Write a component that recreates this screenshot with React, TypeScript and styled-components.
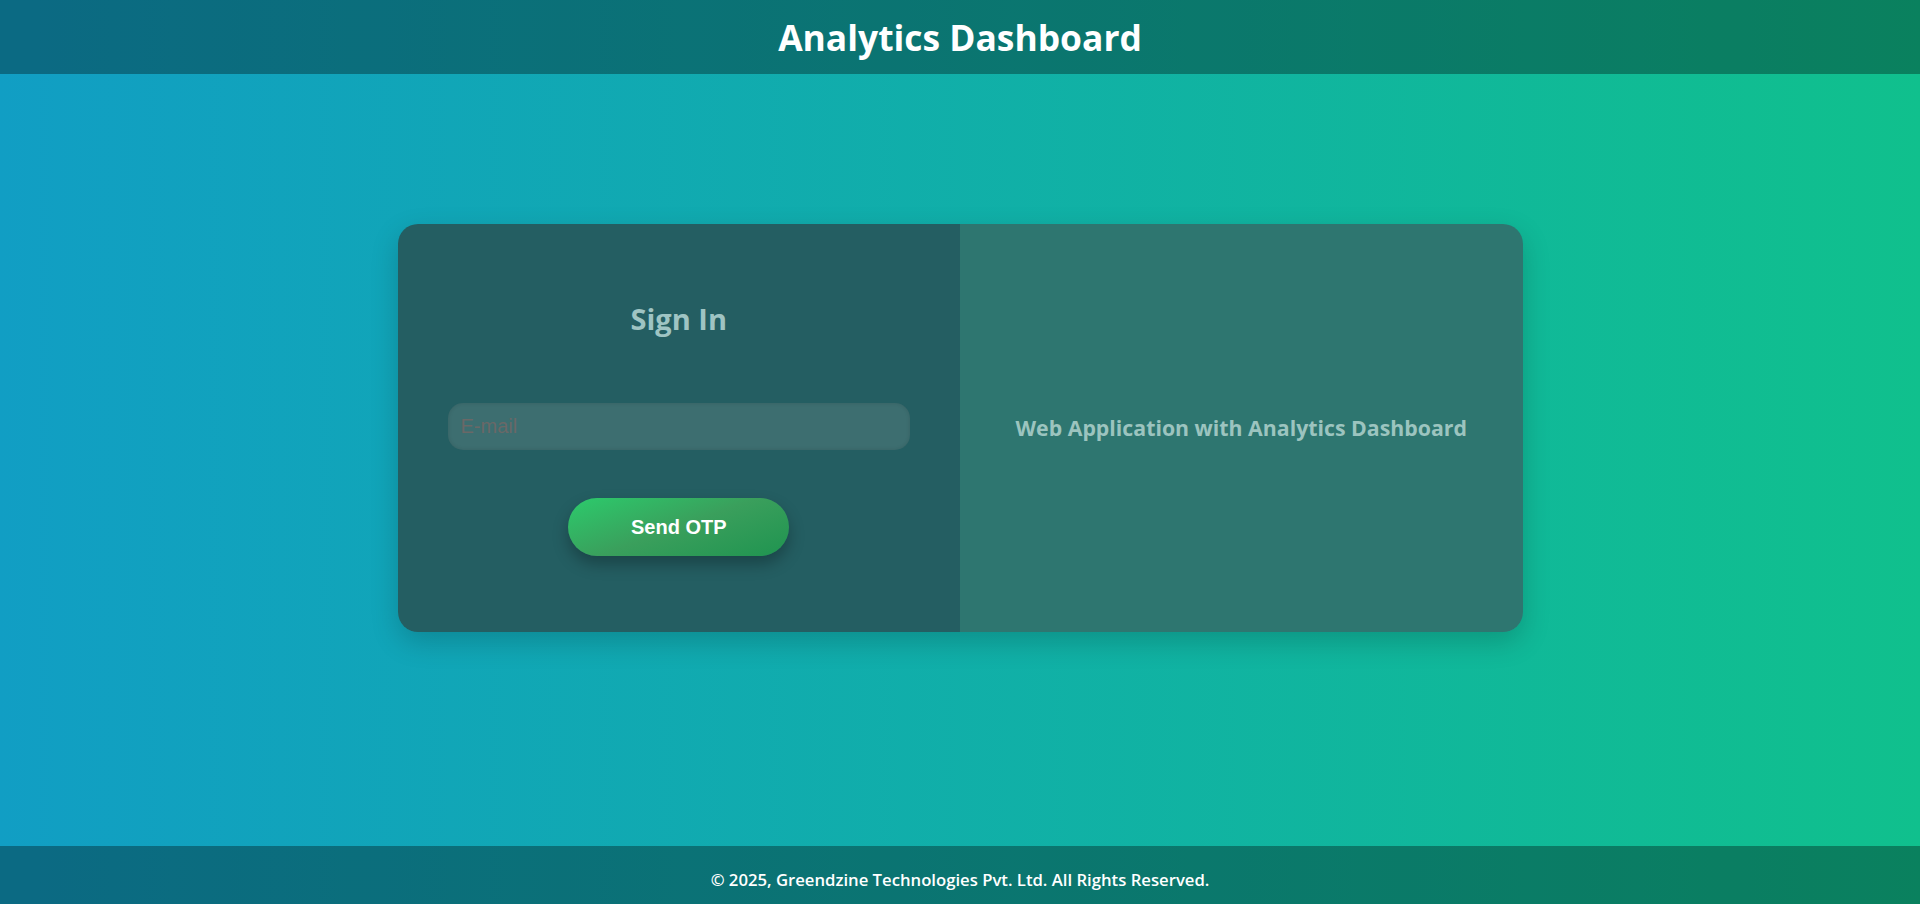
import React from "react";
import styled, { createGlobalStyle } from "styled-components";

const GlobalStyle = createGlobalStyle`
  * { box-sizing: border-box; }
  html, body { margin: 0; padding: 0; height: 100%; }
  body {
    font-family: "Open Sans", "Noto Sans", sans-serif;
    background: linear-gradient(90deg, #109dc4 0%, #10c08c 100%);
  }
  #root { min-height: 100vh; }
`;

const Page = styled.div`
  display: flex;
  flex-direction: column;
  min-height: 100vh;
  background: linear-gradient(90deg, #119ec4 0%, #10c08d 100%);
`;

const Header = styled.header`
  height: 74px;
  display: flex;
  align-items: center;
  justify-content: center;
  background: rgba(0, 0, 0, 0.33);
`;

const Title = styled.h1`
  margin: 0;
  color: #ffffff;
  font-family: "Open Sans", sans-serif;
  font-weight: 700;
  font-size: 35.4px;
  line-height: 1;
  padding-top: 2px;
`;

const Main = styled.main`
  flex: 1;
  display: flex;
  justify-content: center;
  align-items: flex-start;
  padding-top: 150px;
`;

const Card = styled.section`
  width: 1125px;
  height: 408px;
  display: grid;
  grid-template-columns: 1fr 1fr;
  border-radius: 20px;
  overflow: hidden;
  box-shadow: 0 10px 28px rgba(0, 0, 0, 0.18);
`;

const FormPanel = styled.div`
  background: #245e62;
  padding: 0 50px;
  display: flex;
  flex-direction: column;
  align-items: center;
  justify-content: center;
`;

const InfoPanel = styled.div`
  background: #2e7670;
  display: flex;
  align-items: center;
  justify-content: center;
  padding: 0 40px;
`;

const Heading = styled.h2`
  margin: 0 0 65px 0;
  color: #9fc4c3;
  font-family: "Open Sans", sans-serif;
  font-weight: 700;
  font-size: 29px;
  line-height: 38px;
`;

const EmailInput = styled.input`
  width: 100%;
  height: 47px;
  border: none;
  outline: none;
  border-radius: 15px;
  padding: 0 13px;
  background: #3d6e70;
  box-shadow: inset 0 0 4px rgba(0, 0, 0, 0.12);
  font-family: "Liberation Sans", Arial, sans-serif;
  font-size: 20px;
  color: #e0eeee;
  &::placeholder { color: #6a6867; }
`;

const SendButton = styled.button`
  margin-top: 48px;
  width: 221px;
  height: 58px;
  border: none;
  border-radius: 29px;
  background: linear-gradient(160deg, #2ccb6c 0%, #3a9f5c 50%, #1f9450 100%);
  color: #ffffff;
  font-family: "Liberation Sans", Arial, sans-serif;
  font-weight: 700;
  font-size: 20px;
  cursor: pointer;
  box-shadow: 0 8px 16px rgba(0, 0, 0, 0.28);
`;

const Tagline = styled.p`
  margin: 0;
  color: #9cc4bf;
  font-family: "Open Sans", sans-serif;
  font-weight: 700;
  font-size: 21.3px;
  line-height: 30px;
  text-align: center;
`;

const Footer = styled.footer`
  height: 58px;
  display: flex;
  align-items: center;
  justify-content: center;
  background: rgba(0, 0, 0, 0.33);
`;

const FooterText = styled.p`
  margin: 0;
  color: #ffffff;
  font-family: "Open Sans", sans-serif;
  font-weight: 600;
  font-size: 16.7px;
  padding-top: 8px;
`;

export default function App() {
  return (
    <>
      <GlobalStyle />
      <Page>
        <Header>
          <Title>Analytics Dashboard</Title>
        </Header>
        <Main>
          <Card>
            <FormPanel>
              <Heading>Sign In</Heading>
              <EmailInput type="email" placeholder="E-mail" />
              <SendButton type="button">Send OTP</SendButton>
            </FormPanel>
            <InfoPanel>
              <Tagline>Web Application with Analytics Dashboard</Tagline>
            </InfoPanel>
          </Card>
        </Main>
        <Footer>
          <FooterText>© 2025, Greendzine Technologies Pvt. Ltd. All Rights Reserved.</FooterText>
        </Footer>
      </Page>
    </>
  );
}
